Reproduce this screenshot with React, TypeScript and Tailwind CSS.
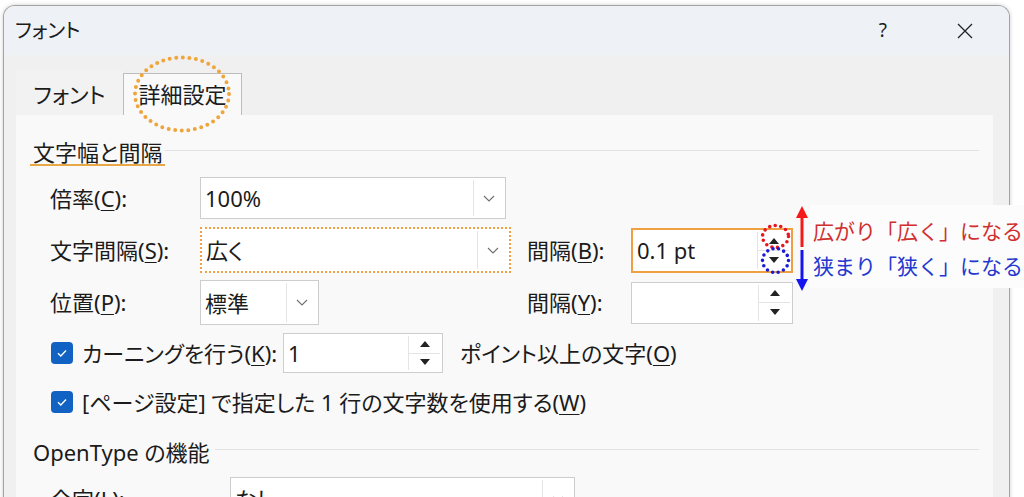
import type { JSX, ReactNode } from 'react';

const Chevron = (): JSX.Element => (
  <svg width="12" height="7" viewBox="0 0 12 7">
    <path d="M1 1l5 5 5-5" fill="none" stroke="#707070" strokeWidth="1.1" />
  </svg>
);

const Tri = ({ up }: { up?: boolean }): JSX.Element => (
  <svg width="10" height="6" viewBox="0 0 10 6">
    <polygon points={up ? '0,6 5,0 10,6' : '0,0 10,0 5,6'} fill="#222" />
  </svg>
);

const Key = ({ k }: { k: string }): JSX.Element => (
  <>
    (<span className="underline decoration-1 underline-offset-[3px]">{k}</span>)
  </>
);

type BoxProps = { value?: string; className: string };

const Combo = ({ value, className }: BoxProps): JSX.Element => (
  <div className={`flex items-stretch bg-white ${className}`}>
    <div className="flex flex-1 items-center pl-[4px] text-[22px] leading-none">{value}</div>
    <div className="my-[2px] mr-[2px] flex w-[30px] items-center justify-center border-l border-[#e4e4e4]">
      <Chevron />
    </div>
  </div>
);

const Spin = ({ value, className }: BoxProps): JSX.Element => (
  <div className={`flex items-stretch bg-white ${className}`}>
    <div className="flex flex-1 items-center pl-[4px] text-[22px] leading-none">{value}</div>
    <div className="my-[2px] mr-[2px] flex w-[32px] flex-col border-l border-[#e4e4e4]">
      <div className="flex flex-1 items-center justify-center border-b border-[#e4e4e4]">
        <Tri up />
      </div>
      <div className="flex flex-1 items-center justify-center">
        <Tri />
      </div>
    </div>
  </div>
);

const Check = (): JSX.Element => (
  <div className="flex h-[22px] w-[22px] shrink-0 items-center justify-center rounded-[4px] bg-[#1162c3]">
    <svg width="14" height="14" viewBox="0 0 14 14">
      <path d="M3 7.2l2.8 2.8L11 4.6" fill="none" stroke="#fff" strokeWidth="1.4" />
    </svg>
  </div>
);

const Section = ({ children, lineClass }: { children: ReactNode; lineClass?: string }): JSX.Element => (
  <div className="flex items-center pr-[14px] pl-[14px]">
    {children}
    <div className={`mb-[6px] h-px flex-1 bg-[#e2e2e2] ${lineClass ?? ''}`} />
  </div>
);

export default function App(): JSX.Element {
  return (
    <div className="relative h-[497px] w-[1024px] overflow-hidden bg-white font-['Noto_Sans','Noto_Sans_CJK_JP',sans-serif] text-[#1b1b1b] [font-feature-settings:'palt']">
      {/* dialog */}
      <div className="mt-[5px] ml-[3px] flex h-[500px] w-[1007px] flex-col overflow-hidden rounded-t-[12px] border border-b-0 border-[#a3a3a3] bg-[#f0f0f0] shadow-[0_0_4px_rgba(0,0,0,0.2)]">
        {/* title bar */}
        <div className="flex h-[49px] shrink-0 items-center bg-[#eef2f7] pl-[11px]">
          <span className="text-[20px]">フォント</span>
          <span className="ml-auto text-[19px]">?</span>
          <svg className="mr-[36px] ml-[70px]" width="16" height="16" viewBox="0 0 16 16">
            <path d="M1 1l14 14M15 1L1 15" stroke="#222" strokeWidth="1.3" />
          </svg>
        </div>

        {/* tabs */}
        <div className="flex h-[60px] shrink-0 items-end pl-[12px]">
          <div className="flex h-[45px] w-[107px] items-center justify-center bg-[#f2f2f2] pt-[4px] text-[22px]">
            フォント
          </div>
          <div className="flex h-[42px] w-[119px] items-center justify-center border border-b-0 border-[#bdbdbd] bg-[#f9f9f9] text-[22px]">
            詳細設定
          </div>
        </div>

        {/* panel */}
        <div className="ml-[12px] w-[977px] flex-1 bg-[#f9f9f9] pt-[25px] text-[22px]">
          <Section>
            <span className="flex h-[26px] items-center border-b-2 border-[#e8a848] px-[3px]">文字幅と間隔</span>
          </Section>

          <div className="mt-[6px] pl-[34px]">
            <div className="flex h-[52px] items-center">
              <span className="w-[150px]">
                倍率<Key k="C" />:
              </span>
              <Combo value="100%" className="h-[42px] w-[306px] border border-[#cdcdcd]" />
            </div>

            <div className="flex h-[52px] items-center">
              <span className="w-[150px]">
                文字間隔<Key k="S" />:
              </span>
              <div className="w-[327px]">
                <Combo value="広く" className="h-[46px] w-[311px] border-2 border-dotted border-[#eea043]" />
              </div>
              <span className="w-[104px]">
                間隔<Key k="B" />:
              </span>
              <Spin value="0.1 pt" className="h-[45px] w-[162px] border-2 border-[#eea043]" />
            </div>

            <div className="flex h-[53px] items-center">
              <span className="w-[150px]">
                位置<Key k="P" />:
              </span>
              <div className="w-[327px]">
                <Combo value="標準" className="h-[45px] w-[119px] border border-[#cdcdcd]" />
              </div>
              <span className="w-[104px]">
                間隔<Key k="Y" />:
              </span>
              <Spin className="h-[42px] w-[162px] border border-[#cdcdcd]" />
            </div>
          </div>

          <div className="pl-[35px]">
            <div className="flex h-[48px] items-center">
              <div className="flex w-[232px] items-center gap-[9px]">
                <Check />
                <span>
                  カーニングを行う<Key k="K" />:
                </span>
              </div>
              <Spin value="1" className="h-[40px] w-[160px] border border-[#cdcdcd]" />
              <span className="ml-[17px]">
                ポイント以上の文字<Key k="O" />
              </span>
            </div>

            <div className="flex h-[50px] items-center gap-[9px]">
              <Check />
              <span>
                [ページ設定] で指定した 1 行の文字数を使用する<Key k="W" />
              </span>
            </div>
          </div>

          <div className="flex h-[50px] items-center">
            <div className="w-full">
              <Section lineClass="ml-[5px]">
                <span className="pl-[3px]">OpenType の機能</span>
              </Section>
            </div>
          </div>

          <div className="flex h-[44px] items-center pl-[34px]">
            <span className="w-[180px]">
              合字<Key k="L" />:
            </span>
            <Combo value="なし" className="h-[44px] w-[345px] border border-[#cdcdcd]" />
          </div>
        </div>
      </div>

      {/* annotations */}
      <svg className="absolute top-[54px] left-[131px]" width="102" height="80" viewBox="0 0 102 80">
        <ellipse cx="51" cy="40" rx="47" ry="36.5" fill="none" stroke="#f0a53c" strokeWidth="4" strokeLinecap="round" strokeDasharray="0 6.6" />
      </svg>
      <svg className="absolute top-[223px] left-[760px]" width="31" height="27" viewBox="0 0 31 27">
        <ellipse cx="15.5" cy="13.5" rx="13" ry="11" fill="none" stroke="#e8141e" strokeWidth="3.6" strokeLinecap="round" strokeDasharray="0 5.6" />
      </svg>
      <svg className="absolute top-[246px] left-[760px]" width="31" height="29" viewBox="0 0 31 29">
        <ellipse cx="15.5" cy="14.5" rx="13" ry="12" fill="none" stroke="#1b1bd6" strokeWidth="3.6" strokeLinecap="round" strokeDasharray="0 5.6" />
      </svg>
      <svg className="absolute top-[205px] left-[795px]" width="14" height="42" viewBox="0 0 14 42">
        <line x1="7" y1="42" x2="7" y2="10" stroke="#f51818" strokeWidth="3" />
        <polygon points="1,13 7,1 13,13" fill="#f51818" />
      </svg>
      <svg className="absolute top-[250px] left-[795px]" width="14" height="42" viewBox="0 0 14 42">
        <line x1="7" y1="0" x2="7" y2="32" stroke="#1414f0" strokeWidth="3" />
        <polygon points="1,29 7,41 13,29" fill="#1414f0" />
      </svg>
      <div className="absolute top-[205px] left-[810px] h-[83px] w-[214px] bg-[#fcfcfc] pt-[9px] pl-[3px] text-[21px] whitespace-nowrap [font-feature-settings:normal]">
        <div className="h-[35px] leading-[35px] text-[#d12f2f]">広がり「広く」になる</div>
        <div className="h-[35px] leading-[35px] text-[#2438cf]">狭まり「狭く」になる</div>
      </div>
    </div>
  );
}
